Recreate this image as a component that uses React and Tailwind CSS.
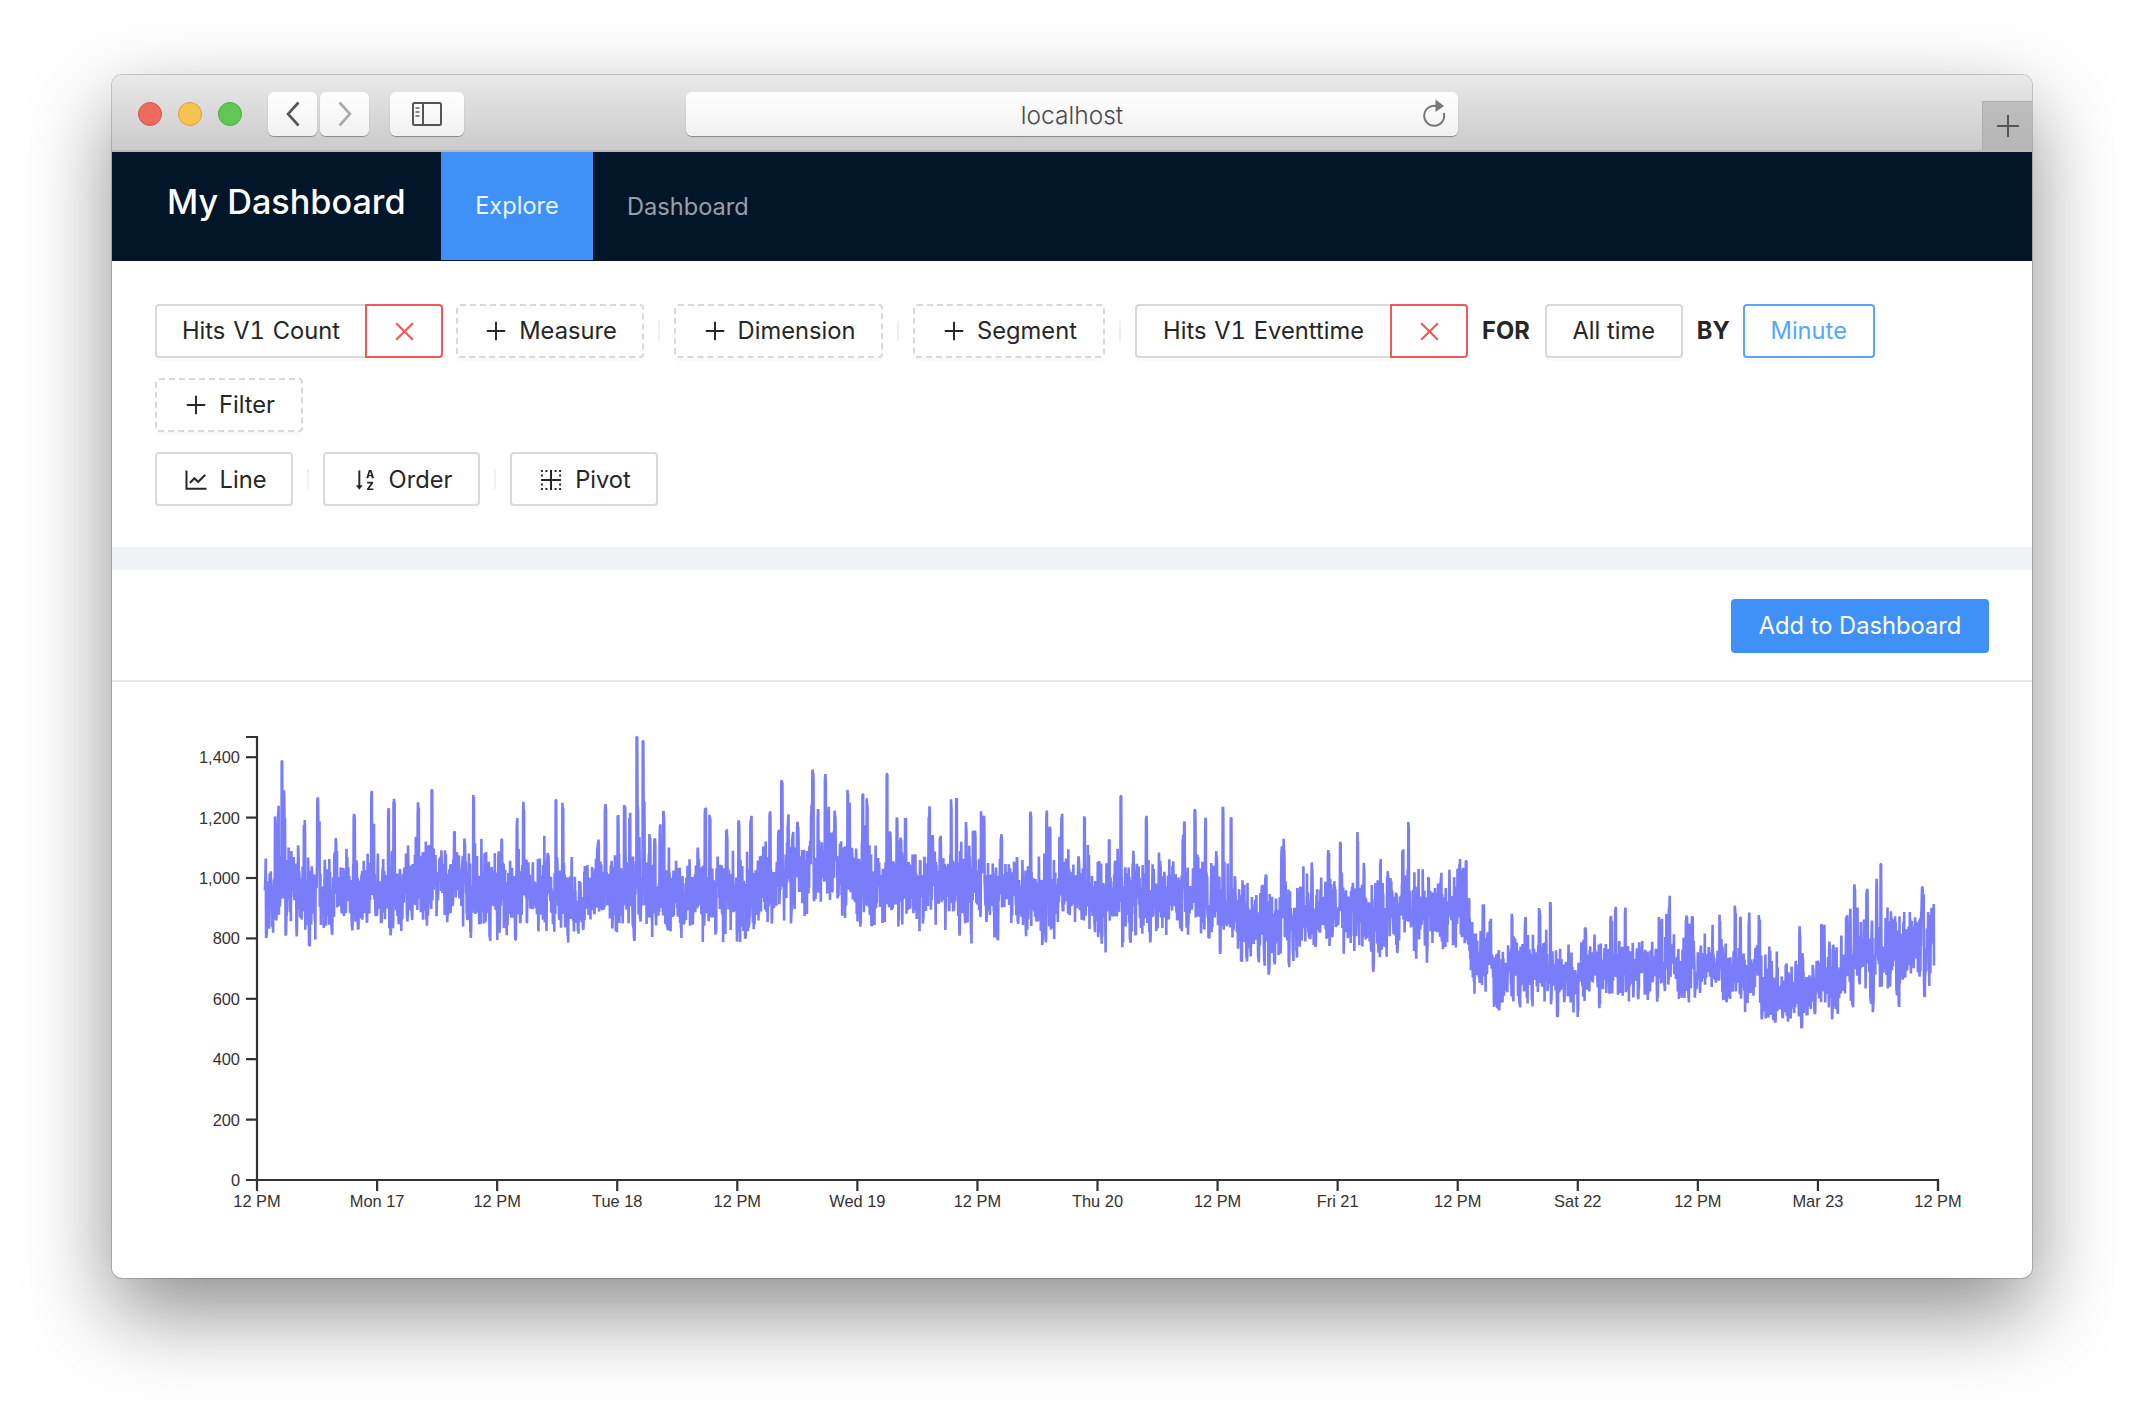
import React from 'react'
import {
  AiOutlineBorderInner,
  AiOutlineClose,
  AiOutlineLineChart,
  AiOutlinePlus,
  AiOutlineSortAscending,
} from 'react-icons/ai'

// chart scale, in page pixels
const AXIS_X = 257
const AXIS_END = 1938
const ZERO_Y = 1180
const PX_PER_200 = 60.4

const yTicks = [0, 200, 400, 600, 800, 1000, 1200, 1400]
const xLabels = [
  '12 PM', 'Mon 17', '12 PM', 'Tue 18', '12 PM', 'Wed 19', '12 PM', 'Thu 20',
  '12 PM', 'Fri 21', '12 PM', 'Sat 22', '12 PM', 'Mar 23', '12 PM',
]

// rough centre of the noise band along the x axis
const centre = [
  [265, 891], [342, 898], [465, 873], [547, 898], [643, 891], [738, 898],
  [834, 875], [902, 891], [984, 905], [1094, 898], [1203, 898], [1258, 919],
  [1367, 919], [1442, 905], [1465, 911], [1477, 970], [1572, 972], [1640, 966],
  [1777, 978], [1805, 984], [1860, 952], [1934, 938],
]

// hand placed peaks that stand out in the series
const peaks = [
  [282, 761], [637, 737], [643, 741], [887, 774], [1121, 796], [1466, 861],
  [1881, 864], [432, 790], [556, 800], [812, 805], [1195, 810],
]

const centreAt = (x) => {
  for (let i = 1; i < centre.length; i++) {
    if (x <= centre[i][0]) {
      const [x0, y0] = centre[i - 1]
      const [x1, y1] = centre[i]
      return y0 + ((x - x0) / (x1 - x0)) * (y1 - y0)
    }
  }
  return centre[centre.length - 1][1]
}

const buildSeries = () => {
  let seed = 20190323
  const rnd = () => {
    seed = (seed * 1664525 + 1013904223) % 4294967296
    return seed / 4294967296
  }
  const gauss = () => (rnd() + rnd() + rnd() + rnd() - 2) * 1.7
  const count = 6000
  const pts = []
  let hold = 0
  let offset = 0
  let drift = 0
  for (let i = 0; i <= count; i++) {
    const x = 265 + (i / count) * (1934 - 265)
    const late = x > 1470 && x < 1850
    const sigma = late ? 14 : 18
    drift = drift * 0.99 + gauss() * 0.9
    if (hold === 0) {
      const r = rnd()
      // spikes stay up for a few samples so they read as thick bars
      if (r < 0.035) {
        offset = -(25 + rnd() * (late ? 38 : 68))
        hold = 2 + Math.floor(rnd() * 3)
      } else if (r < 0.06) {
        offset = 22 + rnd() * (late ? 18 : 28)
        hold = 2 + Math.floor(rnd() * 2)
      } else {
        offset = 0
      }
    } else {
      hold--
    }
    let y = centreAt(x) + drift + offset - gauss() * (offset ? 4 : sigma)
    peaks.forEach(([px, py]) => {
      if (Math.abs(px - x) < 0.42) y = py
    })
    pts.push(`${x.toFixed(1)} ${y.toFixed(1)}`)
  }
  return 'M' + pts.join('L')
}

const seriesPath = buildSeries()

const Chart = () => (
  <svg viewBox="112 682 1920 596" className="block w-[1920px] h-[596px]">
    <path d={seriesPath} fill="none" stroke="#797dfa" strokeWidth="2.6" strokeLinejoin="bevel" />
    <g stroke="#333" strokeWidth="2.2" fill="none">
      <path d={`M246 737H${AXIS_X}V${ZERO_Y}`} />
      <path d={`M246 ${ZERO_Y}H${AXIS_END}V1191`} />
      {yTicks.map((v) => {
        const y = ZERO_Y - (v / 200) * PX_PER_200
        return <path key={v} d={`M246 ${y}H${AXIS_X}`} />
      })}
      {xLabels.map((_, i) => {
        const x = AXIS_X + (i * (AXIS_END - AXIS_X)) / 14
        return <path key={i} d={`M${x} ${ZERO_Y}V1191`} />
      })}
    </g>
    <g fill="#333" fontFamily="'Liberation Sans', sans-serif" fontSize="16.4">
      {yTicks.map((v) => (
        <text key={v} x="240" y={ZERO_Y - (v / 200) * PX_PER_200 + 6} textAnchor="end">
          {v.toLocaleString('en-US')}
        </text>
      ))}
      {xLabels.map((label, i) => (
        <text key={i} x={AXIS_X + (i * (AXIS_END - AXIS_X)) / 14} y="1206.5" textAnchor="middle">
          {label}
        </text>
      ))}
    </g>
  </svg>
)

const Divider = () => <div className="w-[2px] h-[20px] bg-[#f0f0f0] mx-[14px] shrink-0" />

const Btn = ({ width, className = 'border-[#d9d9d9]', children }) => (
  <div
    className={`flex items-center justify-center gap-[10px] h-[54px] shrink-0 rounded-[4px] border-2 bg-white shadow-[0_3px_0_rgba(0,0,0,0.02)] ${className}`}
    style={{ width }}
  >
    {children}
  </div>
)

const Removable = ({ label, width, className = '' }) => (
  <div className={`flex shrink-0 ${className}`}>
    <Btn width={width} className="border-[#d9d9d9] rounded-r-none border-r-0 tabular-nums [word-spacing:1.5px]">
      {label}
    </Btn>
    <Btn width={78} className="rounded-l-none border-[#ef5a57] text-[#ef5a57]">
      <AiOutlineClose className="text-[27px]" />
    </Btn>
  </div>
)

const AddBtn = ({ label, width }) => (
  <Btn width={width} className="border-dashed border-[#d9d9d9]">
    <AiOutlinePlus className="text-[26px]" />
    {label}
  </Btn>
)

const Toolbar = () => (
  <div className="flex flex-col gap-[20px] pt-[43px] pb-[41px] pl-[43px] text-[23.7px] text-[#262626]">
    <div className="flex items-center">
      <Removable label="Hits V1 Count" width={210} className="mr-[13px]" />
      <AddBtn label="Measure" width={188} />
      <Divider />
      <AddBtn label="Dimension" width={209} />
      <Divider />
      <AddBtn label="Segment" width={192} />
      <Divider />
      <Removable label="Hits V1 Eventtime" width={255} />
      <span className="ml-[14px] mr-[15px] font-bold">FOR</span>
      <Btn width={138}>All time</Btn>
      <span className="ml-[14px] mr-[13px] font-bold">BY</span>
      <Btn width={132} className="border-[#58a6fb] text-[#58a6fb]">Minute</Btn>
    </div>
    <div className="flex">
      <AddBtn label="Filter" width={148} />
    </div>
    <div className="flex items-center">
      <Btn width={138} className="border-[#d9d9d9] pt-[2px]">
        <AiOutlineLineChart className="text-[28px]" />
        Line
      </Btn>
      <Divider />
      <Btn width={157} className="border-[#d9d9d9] pt-[2px]">
        <AiOutlineSortAscending className="text-[28px]" />
        Order
      </Btn>
      <Divider />
      <Btn width={148} className="border-[#d9d9d9] pt-[2px]">
        <AiOutlineBorderInner className="text-[28px]" />
        Pivot
      </Btn>
    </div>
  </div>
)

const NavBar = () => (
  <div className="flex h-[109px] bg-[#031528] text-[23.6px]">
    <div className="w-[329px] pl-[55px] pt-[24px] text-[34.2px] leading-[52px] font-medium text-white">
      My Dashboard
    </div>
    <div className="flex items-center justify-center w-[152px] h-[108px] bg-[#3f91f7] text-white/90">
      Explore
    </div>
    <div className="flex items-center pl-[34px] text-white/60">Dashboard</div>
  </div>
)

const Light = ({ className }) => (
  <div className={`w-[24px] h-[24px] rounded-full border ${className}`} />
)

const TitleButton = ({ width, className = '', children }) => (
  <div
    className={`flex items-center justify-center h-[44px] rounded-[6px] bg-gradient-to-b from-white to-[#f1f1f1] shadow-[0_1px_1px_rgba(0,0,0,0.35)] ${className}`}
    style={{ width }}
  >
    {children}
  </div>
)

const TitleBar = () => (
  <div className="relative flex items-center h-[77px] pl-[26px] pt-[2px] bg-gradient-to-b from-[#e9e9e9] to-[#cbcbcb] border-b-2 border-[#b9b9b9]">
    <div className="flex gap-[16px]">
      <Light className="bg-[#ee6a5f] border-[#d8544a]" />
      <Light className="bg-[#f6c351] border-[#d9a03c]" />
      <Light className="bg-[#62c655] border-[#50a944]" />
    </div>
    <div className="flex ml-[26px] gap-[3px]">
      <TitleButton width={49}>
        <svg width="14" height="26" viewBox="0 0 14 26" fill="none" stroke="#555" strokeWidth="2.6">
          <path d="M12.5 1.5 2 13l10.5 11.5" />
        </svg>
      </TitleButton>
      <TitleButton width={49}>
        <svg width="14" height="26" viewBox="0 0 14 26" fill="none" stroke="#aaa" strokeWidth="2.6">
          <path d="M1.5 1.5 12 13 1.5 24.5" />
        </svg>
      </TitleButton>
    </div>
    <TitleButton width={74} className="ml-[21px]">
      <svg width="30" height="24" viewBox="0 0 30 24" fill="none" stroke="#555" strokeWidth="2">
        <rect x="1" y="1" width="28" height="22" rx="1.5" />
        <path d="M11 1v22" />
        <path d="M3.5 6h4M3.5 10h4M3.5 14h4" strokeWidth="2" stroke="#888" />
      </svg>
    </TitleButton>
    <TitleButton width={772} className="relative ml-[222px] pt-[3px] text-[24.5px] font-light text-[#4a4a4a]">
      localhost
      <svg
        width="24"
        height="28"
        viewBox="0 0 24 28"
        fill="none"
        className="absolute right-[12px] top-[7px]"
      >
        <path d="M15 7.2A10 10 0 1 0 21.8 14" stroke="#777" strokeWidth="2" />
        <path d="M13.5 0.5 22 7l-8.5 6z" fill="#777" />
      </svg>
    </TitleButton>
    {/* new tab button sits on the bar corner */}
    <div className="absolute right-0 bottom-0 flex items-center justify-center w-[50px] h-[49px] bg-gradient-to-b from-[#bdbdbd] to-[#b5b5b5] border-l border-t border-[#adadad]">
      <svg width="22" height="22" viewBox="0 0 22 22" stroke="#555" strokeWidth="2">
        <path d="M11 0v22M0 11h22" />
      </svg>
    </div>
  </div>
)

const App = () => (
  <div className="w-[2144px] h-[1426px] pt-[75px] pl-[112px] bg-white overflow-hidden font-['Inter',sans-serif]">
    <div className="w-[1920px] h-[1203px] rounded-[10px] overflow-hidden bg-white shadow-[0_0_0_1px_rgba(0,0,0,0.18),0_34px_85px_rgba(0,0,0,0.45)]">
      <TitleBar />
      <NavBar />
      <Toolbar />
      <div className="h-[23px] bg-[#f0f2f5]" />
      <div className="flex justify-end h-[112px] pt-[29px] pr-[43px] border-b-2 border-[#e8e8e8]">
        <div className="flex items-center justify-center w-[258px] h-[54px] rounded-[4px] bg-[#3f91f7] text-[23.7px] text-white">
          Add to Dashboard
        </div>
      </div>
      <Chart />
    </div>
  </div>
)

export default App
